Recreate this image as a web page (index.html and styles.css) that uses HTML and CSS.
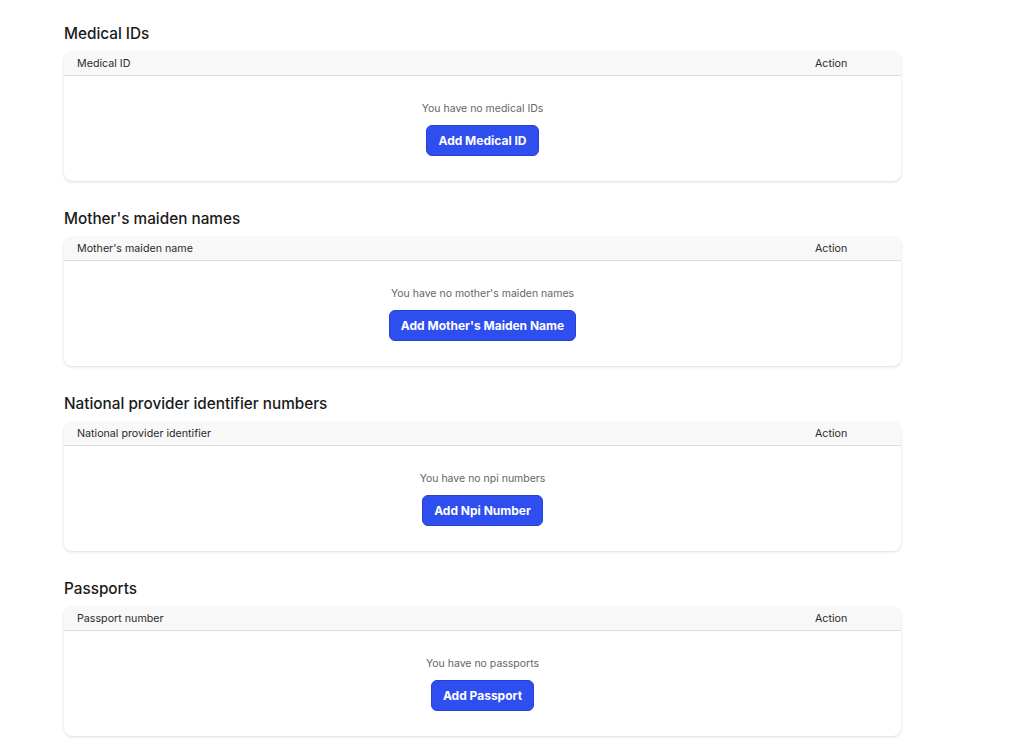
FILE: index.html
```html
<!DOCTYPE html>
<html lang="en">
<head>
  <meta charset="UTF-8" />
  <meta name="viewport" content="width=device-width, initial-scale=1.0" />
  <title>Identifiers</title>
  <link rel="stylesheet" href="styles.css">
</head>
<body>
  <main class="container">
    <section class="id-section">
      <h2>Medical IDs</h2>
      <div class="id-card">
        <div class="id-card-header">
          <span class="col-main">Medical ID</span>
          <span class="col-action">Action</span>
        </div>
        <div class="id-card-body">
          <p>You have no medical IDs</p>
          <button>Add Medical ID</button>
        </div>
      </div>
    </section>

    <section class="id-section">
      <h2>Mother's maiden names</h2>
      <div class="id-card">
        <div class="id-card-header">
          <span class="col-main">Mother's maiden name</span>
          <span class="col-action">Action</span>
        </div>
        <div class="id-card-body">
          <p>You have no mother's maiden names</p>
          <button>Add Mother's Maiden Name</button>
        </div>
      </div>
    </section>

    <section class="id-section">
      <h2>National provider identifier numbers</h2>
      <div class="id-card">
        <div class="id-card-header">
          <span class="col-main">National provider identifier</span>
          <span class="col-action">Action</span>
        </div>
        <div class="id-card-body">
          <p>You have no npi numbers</p>
          <button>Add Npi Number</button>
        </div>
      </div>
    </section>

    <section class="id-section">
      <h2>Passports</h2>
      <div class="id-card">
        <div class="id-card-header">
          <span class="col-main">Passport number</span>
          <span class="col-action">Action</span>
        </div>
        <div class="id-card-body">
          <p>You have no passports</p>
          <button>Add Passport</button>
        </div>
      </div>
    </section>
  </main>
</body>
</html>
```

FILE: styles.css
```css
:root {
  --text-color: #1a1a1a;
  --muted-color: #666;
  --header-bg: #f8f8f8;
  --border-color: #dcdcdc;
  --button-color: #2f4ef0;
  --button-border: #2540d4;
}

body {
  font-family: Inter, 'Noto Sans', sans-serif;
  background-color: #fff;
  color: var(--text-color);
  margin: 0;
  padding: 0;
}

.container {
  width: 837px;
  padding: 24px 0 20px 64px;
}

.id-section {
  margin-bottom: 28px;
}

.id-section h2 {
  margin: 0 0 8px 0;
  font-size: 15.3px;
  line-height: 20px;
  font-weight: 500;
}

.id-card {
  background-color: #fff;
  border-radius: 8px;
  box-shadow: 0 1px 3px rgba(0, 0, 0, 0.14), 0 0 1px rgba(0, 0, 0, 0.06);
  overflow: hidden;
}

.id-card-header {
  display: flex;
  align-items: center;
  padding: 5px 12px 5px 13px;
  background-color: var(--header-bg);
  border-bottom: 1px solid var(--border-color);
  font-size: 10.7px;
  line-height: 13px;
  color: #2b2b2b;
}

.col-main {
  flex-grow: 1;
}

.col-action {
  width: 74px;
}

.id-card-body {
  display: flex;
  flex-direction: column;
  align-items: center;
  padding: 25px 0 25px 0;
}

.id-card-body p {
  margin: 0 0 9px 0;
  font-size: 10.5px;
  line-height: 15px;
  color: var(--muted-color);
}

.id-card-body button {
  font-family: inherit;
  font-size: 12px;
  line-height: 17px;
  font-weight: 700;
  color: #fff;
  background-color: var(--button-color);
  border: 1px solid var(--button-border);
  border-radius: 6px;
  padding: 6px 11px;
  cursor: pointer;
}
```
